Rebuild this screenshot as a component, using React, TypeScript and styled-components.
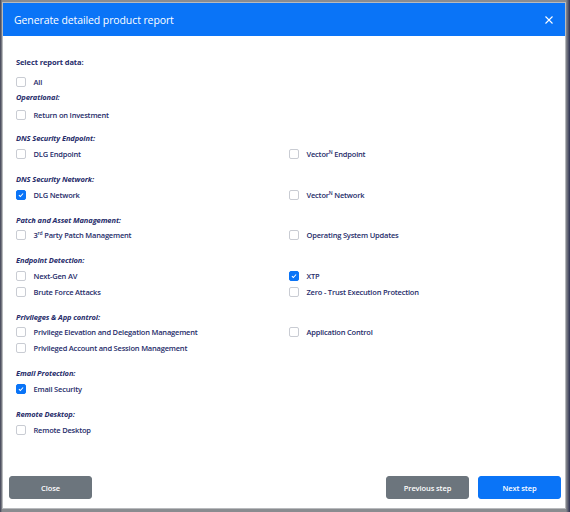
import React from "react";
import styled, { createGlobalStyle } from "styled-components";

const GlobalStyle = createGlobalStyle`
	html, body {
		margin: 0;
		padding: 0;
		background: #86888c;
	}
	body {
		font-family: "Open Sans", "Noto Sans", sans-serif;
		color: #262c6a;
	}
`;

const Backdrop = styled.div`
	width: 570px;
	height: 512px;
	box-sizing: border-box;
	padding: 2px 4px 3px 2px;
	background: linear-gradient(
		to right,
		#3a3d52 0,
		#8a8c90 2px,
		#8a8c90 calc(100% - 4px),
		#2c3050 100%
	);
`;

const Modal = styled.div`
	height: 507px;
	display: flex;
	flex-direction: column;
	background: #fff;
	border: 1px solid #b8babd;
	box-sizing: border-box;
	overflow: hidden;
`;

const Header = styled.div`
	height: 33px;
	flex: none;
	display: flex;
	align-items: center;
	justify-content: space-between;
	padding: 0 12px 0 11px;
	background: #0a74f7;
	color: #fff;
`;

const Title = styled.h1`
	margin: 0;
	font-size: 10.5px;
	font-weight: 500;
	letter-spacing: -0.1px;
`;

const CloseIcon = styled.button`
	border: 0;
	background: none;
	padding: 0;
	display: flex;
	color: #fff;
	cursor: pointer;
`;

const Body = styled.div`
	padding: 19px 13px 0 13px;
`;

const Lead = styled.div`
	font-size: 7.5px;
	font-weight: 700;
	letter-spacing: -0.1px;
	line-height: 15px;
	margin-bottom: 4px;
`;

const Section = styled.section<{ $space?: number }>`
	margin-bottom: ${(p) => p.$space ?? 10.3}px;
`;

const SectionTitle = styled.div<{ $gap?: number }>`
	font-size: 7.5px;
	font-weight: 700;
	font-style: italic;
	letter-spacing: -0.1px;
	line-height: 15px;
	margin-bottom: ${(p) => p.$gap ?? 0}px;
`;

const Options = styled.div`
	display: grid;
	grid-template-columns: 273px 1fr;
	grid-auto-rows: 15.5px;
`;

const Option = styled.label`
	display: flex;
	align-items: center;
	gap: 7.5px;
	font-size: 7.5px;
	font-weight: 600;
	letter-spacing: -0.2px;
	cursor: pointer;
`;

const Box = styled.span<{ $on?: boolean }>`
	width: 10px;
	height: 10px;
	box-sizing: border-box;
	flex: none;
	border-radius: 2px;
	border: 1px solid ${(p) => (p.$on ? "#0a74f7" : "#c9ccd3")};
	background: ${(p) => (p.$on ? "#0a74f7" : "#fff")};
	display: flex;
	align-items: center;
	justify-content: center;
`;

const Sup = styled.sup`
	font-size: 5px;
	line-height: 0;
	vertical-align: 3px;
`;

const Footer = styled.div`
	margin-top: auto;
	display: flex;
	align-items: center;
	padding: 0 4px 9px 6px;
	gap: 9px;
`;

const Button = styled.button<{ $primary?: boolean }>`
	width: 83px;
	height: 23px;
	border-radius: 3px;
	border: 1px solid ${(p) => (p.$primary ? "#0a74f7" : "#6c757d")};
	background: ${(p) => (p.$primary ? "#0a74f7" : "#6c757d")};
	color: #fff;
	font-family: inherit;
	font-size: 7.5px;
	font-weight: 600;
	letter-spacing: -0.1px;
	cursor: pointer;
`;

const Spacer = styled.div`
	flex: 1;
`;

type Item = { label: React.ReactNode; checked?: boolean };
type Group = { title: string; items: Item[]; gap?: number; space?: number };

const groups: Group[] = [
	{ title: "Operational:", gap: 3, space: 8, items: [{ label: "Return on Investment" }] },
	{
		title: "DNS Security Endpoint:",
		items: [
			{ label: "DLG Endpoint" },
			{ label: <>Vector<Sup>N</Sup> Endpoint</> },
		],
	},
	{
		title: "DNS Security Network:",
		items: [
			{ label: "DLG Network", checked: true },
			{ label: <>Vector<Sup>N</Sup> Network</> },
		],
	},
	{
		title: "Patch and Asset Management:",
		items: [
			{ label: <>3<Sup>rd</Sup> Party Patch Management</> },
			{ label: "Operating System Updates" },
		],
	},
	{
		title: "Endpoint Detection:",
		items: [
			{ label: "Next-Gen AV" },
			{ label: "XTP", checked: true },
			{ label: "Brute Force Attacks" },
			{ label: "Zero - Trust Execution Protection" },
		],
	},
	{
		title: "Privileges & App control:",
		items: [
			{ label: "Privilege Elevation and Delegation Management" },
			{ label: "Application Control" },
			{ label: "Privileged Account and Session Management" },
		],
	},
	{ title: "Email Protection:", items: [{ label: "Email Security", checked: true }] },
	{ title: "Remote Desktop:", items: [{ label: "Remote Desktop" }] },
];

function Check({ checked }: { checked?: boolean }) {
	return (
		<Box $on={checked}>
			{checked && (
				<svg width="6" height="6" viewBox="0 0 8 8">
					<path d="M1.2 4.2 3.1 6 6.8 2" fill="none" stroke="#fff" strokeWidth="1.4" />
				</svg>
			)}
		</Box>
	);
}

function ReportOption({ label, checked }: Item) {
	return (
		<Option>
			<Check checked={checked} />
			<span>{label}</span>
		</Option>
	);
}

export default function App() {
	return (
		<>
			<GlobalStyle />
			<Backdrop>
				<Modal>
					<Header>
						<Title>Generate detailed product report</Title>
						<CloseIcon aria-label="Close">
							<svg width="8" height="8" viewBox="0 0 8 8">
								<path d="M0.5 0.5 7.5 7.5M7.5 0.5 0.5 7.5" stroke="#fff" strokeWidth="1.1" />
							</svg>
						</CloseIcon>
					</Header>
					<Body>
						<Lead>Select report data:</Lead>
						<Options>
							<ReportOption label="All" />
						</Options>
						{groups.map((g) => (
							<Section key={g.title} $space={g.space}>
								<SectionTitle $gap={g.gap}>{g.title}</SectionTitle>
								<Options>
									{g.items.map((it, i) => (
										<ReportOption key={i} {...it} />
									))}
								</Options>
							</Section>
						))}
					</Body>
					<Footer>
						<Button>Close</Button>
						<Spacer />
						<Button>Previous step</Button>
						<Button $primary>Next step</Button>
					</Footer>
				</Modal>
			</Backdrop>
		</>
	);
}
